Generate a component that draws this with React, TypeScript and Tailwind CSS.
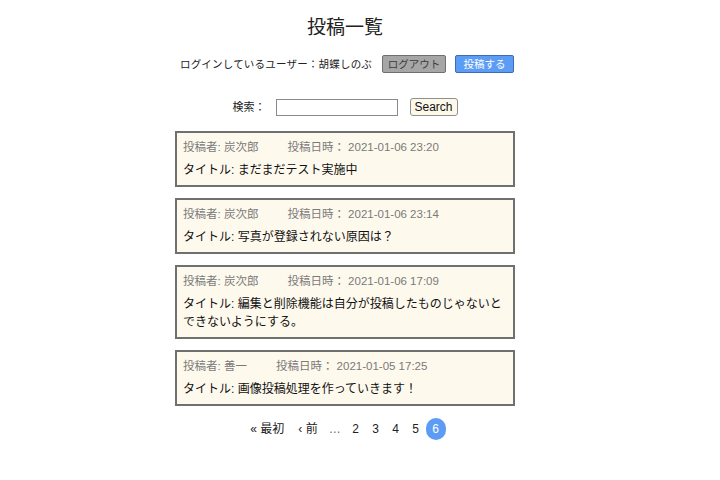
const posts = [
  {
    author: "炭次郎",
    date: "2021-01-06 23:20",
    title: "まだまだテスト実施中",
  },
  {
    author: "炭次郎",
    date: "2021-01-06 23:14",
    title: "写真が登録されない原因は？",
  },
  {
    author: "炭次郎",
    date: "2021-01-06 17:09",
    title: "編集と削除機能は自分が投稿したものじゃないとできないようにする。",
  },
  {
    author: "善一",
    date: "2021-01-05 17:25",
    title: "画像投稿処理を作っていきます！",
  },
];

export default function App() {
  return (
    <div
      className="min-h-[480px] w-[720px] bg-white text-[#222]"
      style={{ fontFamily: '"Liberation Sans", "Noto Sans CJK JP", sans-serif' }}
    >
      <div className="flex justify-center pr-[30px] pt-[14px]">
        <div className="flex w-[340px] flex-col items-center">
          <h1 className="text-[19px] leading-[28px] text-[#222]">投稿一覧</h1>

          <div className="ml-[4px] mt-[13px] flex shrink-0 items-center whitespace-nowrap text-[10.5px]">
            <span className="leading-[18px] tracking-[0.2px]">
              ログインしているユーザー：胡蝶しのぶ
            </span>
            <button className="ml-[10px] h-[18px] w-[64px] shrink-0 rounded-[2px] border border-[#6f6f6f] bg-[#a6a6a6] text-[10.5px] leading-[16px] text-[#3c3c3c]">
              ログアウト
            </button>
            <button className="ml-[9px] h-[18px] w-[59px] shrink-0 rounded-[2px] border border-[#3a6db5] bg-[#5c9cf4] text-[10.5px] leading-[16px] text-white">
              投稿する
            </button>
          </div>

          <div className="mt-[25px] flex items-center text-[11px]">
            <span className="leading-[18px]">検索：</span>
            <input
              type="text"
              className="ml-[10px] h-[17px] w-[122px] border border-[#8a8a8a] bg-white outline-none"
            />
            <button className="ml-[12px] h-[18px] w-[48px] rounded-[3px] border border-[#8f8f8f] bg-[#fdf8ea] text-[12px] leading-[16px] text-[#111]">
              Search
            </button>
          </div>

          <div className="mt-[15px] flex w-[340px] flex-col gap-[11px]">
            {posts.map((p, i) => (
              <div
                key={i}
                className="border-2 border-[#707070] bg-[#fef9ed] px-[6px] pb-[6px] pt-[5px]"
              >
                <div className="flex text-[11.5px] leading-[18px] text-[#7a7a7a]">
                  <span>投稿者: {p.author}</span>
                  <span className="ml-[29px]">投稿日時： {p.date}</span>
                </div>
                <p className="mt-[5px] text-[12px] leading-[18px] text-[#111]">
                  タイトル: {p.title}
                </p>
              </div>
            ))}
          </div>

          <div className="ml-[6px] mt-[12px] flex items-center text-[12px] leading-[22px] text-[#222]">
            <span>« 最初</span>
            <span className="ml-[14px]">‹ 前</span>
            <span className="ml-[7px] w-[20px] text-center text-[#666]">…</span>
            <span className="ml-[1px] w-[20px] text-center">2</span>
            <span className="w-[20px] text-center">3</span>
            <span className="w-[20px] text-center">4</span>
            <span className="w-[20px] text-center">5</span>
            <span className="h-[22px] w-[20px] rounded-[10px] bg-[#5c9cf4] text-center text-white">
              6
            </span>
          </div>
        </div>
      </div>
    </div>
  );
}
